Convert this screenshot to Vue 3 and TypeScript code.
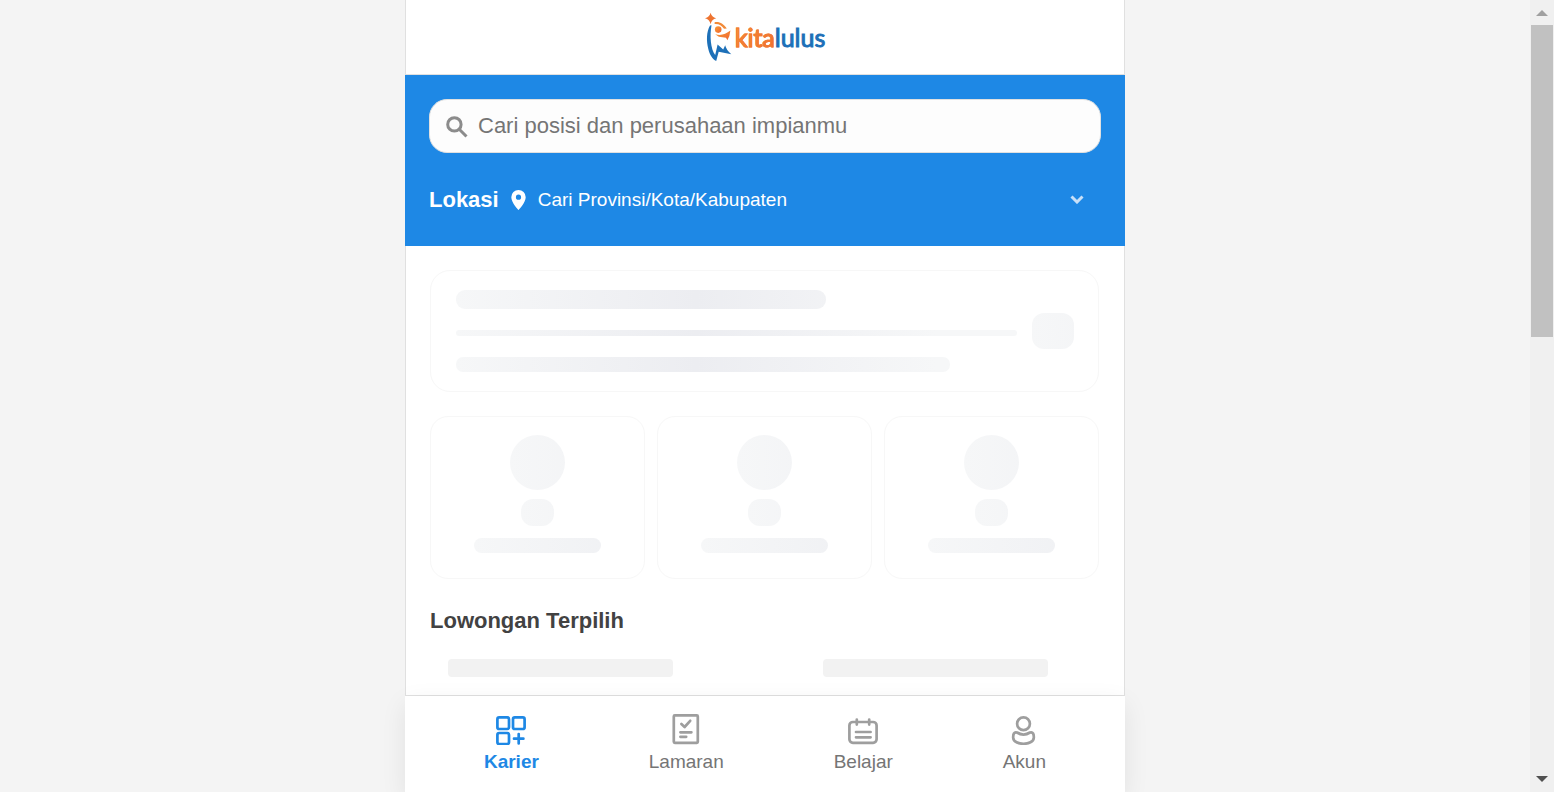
<script setup lang="ts">
import { ref } from 'vue'

type TabId = 'karier' | 'lamaran' | 'belajar' | 'akun'

interface Tab {
  id: TabId
  label: string
}

const tabs: Tab[] = [
  { id: 'karier', label: 'Karier' },
  { id: 'lamaran', label: 'Lamaran' },
  { id: 'belajar', label: 'Belajar' },
  { id: 'akun', label: 'Akun' },
]

const activeTab = ref<TabId>('karier')
const keyword = ref('')
const region = ref('')
</script>

<template>
  <div class="viewport">
    <div class="stage">
      <div class="app">
        <header class="brand">
          <a class="logo" href="#" aria-label="kitalulus">
            <svg class="logo-mark" viewBox="0 0 30 50" aria-hidden="true">
              <defs>
                <linearGradient id="flame" x1="0" y1="0" x2="1" y2="1">
                  <stop offset="0" stop-color="#fa9a35" />
                  <stop offset="1" stop-color="#ee6530" />
                </linearGradient>
              </defs>
              <path fill="#ee7430" d="M5.6 .8Q6.6 5.2 11.2 6.2Q6.6 7.2 5.6 12.2Q4.6 7.2 0 6.2Q4.6 5.2 5.6 .8Z" />
              <path fill="#f28a38" d="M9.6 10.2C15 9.4 18.5 12 21.8 16.6L19 16.8C16.5 13.5 14 11.6 9.6 12Z" />
              <circle cx="13.2" cy="17.6" r="3.3" fill="url(#flame)" />
              <path fill="url(#flame)" d="M10.2 22.2Q18 24.6 25.4 18.6Q25 24 22.4 28.2L21 25.8L13.8 24.8Z" />
              <path
                fill="#1d70b8"
                d="M5 13.6C1.4 20 1.3 29 3.3 37C4.8 43 7.5 47.2 11.2 49L13.7 39.8L26.3 42.2Q21 37.5 20.2 33.2L18.2 37.4L12.6 32.4L10.2 43C5.6 37 4.6 24 6.5 13.2Z"
              />
            </svg>
            <span class="wordmark"><span class="kita">kita</span><span class="lulus">lulus</span></span>
          </a>
        </header>

        <section class="finder">
          <label class="search">
            <svg class="search-icon" viewBox="0 0 22 22" aria-hidden="true">
              <circle cx="8.4" cy="8.4" r="6.7" />
              <path d="M13.5 13.5L20.5 20.5" />
            </svg>
            <input v-model="keyword" type="text" placeholder="Cari posisi dan perusahaan impianmu" aria-label="Cari posisi dan perusahaan" />
          </label>
          <div class="location">
            <label class="location-label" for="region">Lokasi</label>
            <svg class="pin" viewBox="0 0 15 20" aria-hidden="true">
              <path fill-rule="evenodd" d="M7.5 0A7.2 7.2 0 0 0 .3 7.2C.3 12.5 7.5 20 7.5 20S14.7 12.5 14.7 7.2A7.2 7.2 0 0 0 7.5 0ZM7.5 4.6A2.6 2.6 0 1 1 7.5 9.8A2.6 2.6 0 1 1 7.5 4.6Z" />
            </svg>
            <select id="region" v-model="region">
              <option value="">Cari Provinsi/Kota/Kabupaten</option>
            </select>
            <svg class="chevron" viewBox="0 0 14 9" aria-hidden="true">
              <path d="M1.5 1.5L7 7L12.5 1.5" />
            </svg>
          </div>
        </section>

        <main class="content">
          <div class="banner">
            <div class="banner-lines">
              <span class="bone title"></span>
              <span class="bone rule"></span>
              <span class="bone note"></span>
            </div>
            <span class="bone square"></span>
          </div>

          <div class="shortcuts">
            <div v-for="n in 3" :key="n" class="shortcut">
              <span class="bone avatar"></span>
              <span class="bone chip"></span>
              <span class="bone caption"></span>
            </div>
          </div>

          <h2>Lowongan Terpilih</h2>
          <div class="jobs">
            <div v-for="n in 2" :key="n" class="job"><span class="job-title"></span></div>
          </div>
        </main>

        <nav class="tabs">
          <button
            v-for="tab in tabs"
            :key="tab.id"
            type="button"
            :class="{ active: activeTab === tab.id }"
            @click="activeTab = tab.id"
          >
            <svg v-if="tab.id === 'karier'" viewBox="0 0 30 32" aria-hidden="true">
              <rect x="1.4" y="4.4" width="11.6" height="11.6" rx="1.8" />
              <rect x="17" y="4.4" width="11.6" height="11.6" rx="1.8" />
              <rect x="1.4" y="20" width="11.6" height="11" rx="1.8" />
              <path d="M22.7 21V30.4M18 25.7H27.4" />
            </svg>
            <svg v-else-if="tab.id === 'lamaran'" viewBox="0 0 30 32" aria-hidden="true">
              <rect x="2.8" y="2.4" width="24" height="27.4" rx="1" />
              <path d="M10.4 11L13.6 14L19.2 7.8M9.4 19.3H20.4M9.4 23.8H15.2" />
            </svg>
            <svg v-else-if="tab.id === 'belajar'" viewBox="0 0 30 32" aria-hidden="true">
              <rect x="1.4" y="9" width="27.2" height="20.8" rx="3.5" />
              <path d="M8.8 6.6V11.6M21.2 6.6V11.6M8 19H22.6M8 24.3H22.6" />
            </svg>
            <svg v-else viewBox="0 0 30 32" aria-hidden="true">
              <circle cx="14.5" cy="10.8" r="6.4" />
              <path d="M8 19.5C12 22 17 22 21 19.5C24 18.4 25 21.5 24.8 24.8C24.5 28.8 19.5 30.8 14.5 30.8S4.5 28.8 4.2 24.8C4 21.5 5 18.4 8 19.5Z" />
            </svg>
            <span>{{ tab.label }}</span>
          </button>
        </nav>
      </div>
    </div>

    <div class="scrollbar" aria-hidden="true">
      <svg class="arrow up" viewBox="0 0 12 6"><path d="M0 6L6 0L12 6Z" /></svg>
      <div class="track"><div class="thumb"></div></div>
      <svg class="arrow down" viewBox="0 0 12 6"><path d="M0 0L6 6L12 0Z" /></svg>
    </div>
  </div>
</template>

<style>
body {
  margin: 0;
  background: #f4f4f4;
}
</style>

<style scoped>
* {
  box-sizing: border-box;
}

.viewport {
  display: flex;
  height: 100vh;
  overflow: hidden;
  font-family: "Liberation Sans", Arial, sans-serif;
  color: #424242;
  background: #f4f4f4;
}

.stage {
  flex: 1;
  min-width: 0;
  display: flex;
  justify-content: center;
}

.app {
  width: 100%;
  max-width: 720px;
  display: flex;
  flex-direction: column;
  background: #fff;
}

.brand {
  flex: none;
  height: 75px;
  display: flex;
  align-items: center;
  justify-content: center;
  border: 1px solid #e0e0e0;
  border-top: 0;
}

.logo {
  display: flex;
  align-items: center;
  text-decoration: none;
}

.logo-mark {
  width: 30px;
  height: 50px;
}

.wordmark {
  font-family: Lato, "Liberation Sans", sans-serif;
  font-size: 25px;
  line-height: 32px;
  font-weight: 400;
}

.kita {
  color: transparent;
  background: linear-gradient(135deg, #fb9a35, #ec6530);
  background-clip: text;
  -webkit-text-stroke: 1px #f27a32;
}

.lulus {
  color: #1d70b8;
  -webkit-text-stroke: 1px #1d70b8;
}

.finder {
  flex: none;
  padding: 24px;
  background: #1e88e5;
}

.search {
  display: flex;
  align-items: center;
  gap: 10px;
  height: 54px;
  padding: 0 16px;
  border: 1px solid #e0e0e0;
  border-radius: 18px;
  background: #fdfdfd;
}

.search-icon {
  flex: none;
  width: 22px;
  height: 22px;
  margin-top: 2px;
  fill: none;
  stroke: #8c8c8c;
  stroke-width: 3;
}

.search input {
  flex: 1;
  min-width: 0;
  padding: 0;
  border: 0;
  outline: 0;
  background: transparent;
  font: inherit;
  font-size: 22px;
  line-height: 32px;
  color: #424242;
}

.search input::placeholder {
  color: #757575;
  opacity: 1;
}

.location {
  display: flex;
  align-items: center;
  height: 45px;
  margin-top: 24px;
  padding-right: 17px;
  color: #fff;
}

.location-label {
  font-size: 22px;
  font-weight: 700;
}

.pin {
  width: 15px;
  height: 20px;
  margin: 0 12px;
  fill: #fff;
}

.location select {
  flex: 1;
  min-width: 0;
  padding: 0;
  border: 0;
  outline: 0;
  appearance: none;
  background: transparent;
  font: inherit;
  font-size: 19px;
  color: #fff;
}

.location select option {
  color: #424242;
}

.chevron {
  width: 14px;
  height: 9px;
  fill: none;
  stroke: #c8e0f8;
  stroke-width: 3;
}

.content {
  flex: 1;
  min-height: 0;
  overflow: hidden;
  padding: 24px 25px 0 24px;
  border: 1px solid #e0e0e0;
  border-top: 0;
}

.bone {
  display: block;
  background: linear-gradient(to right, #f6f7f8 0, #ecedf1 240px, #f6f7f8 480px);
}

.banner {
  display: flex;
  align-items: center;
  gap: 15px;
  padding: 19px 24px 19px 25px;
  border: 1px solid #f7f7f7;
  border-radius: 20px;
}

.banner-lines {
  flex: 1;
  display: grid;
  gap: 21px;
}

.title {
  width: 66%;
  height: 19px;
  border-radius: 9px;
}

.rule {
  height: 6px;
  border-radius: 3px;
}

.note {
  width: 88%;
  height: 15px;
  border-radius: 7px;
}

.square {
  flex: none;
  width: 42px;
  height: 36px;
  border-radius: 12px;
}

.shortcuts {
  display: grid;
  grid-template-columns: repeat(3, 1fr);
  gap: 12px;
  margin-top: 24px;
}

.shortcut {
  display: flex;
  flex-direction: column;
  align-items: center;
  padding: 18px 0 25px;
  border: 1px solid #f7f7f7;
  border-radius: 18px;
}

.avatar {
  width: 55px;
  height: 55px;
  border-radius: 50%;
}

.chip {
  width: 33px;
  height: 27px;
  margin-top: 9px;
  border-radius: 12px;
}

.caption {
  width: 60%;
  height: 15px;
  margin-top: 12px;
  border-radius: 8px;
}

h2 {
  margin: 30px 0 26px;
  font-size: 22px;
  line-height: 24px;
  font-weight: 700;
}

.jobs {
  display: grid;
  grid-auto-flow: column;
  grid-auto-columns: 375px;
  overflow: hidden;
}

.job {
  height: 120px;
  padding-left: 18px;
}

.job-title {
  display: block;
  width: 225px;
  height: 18px;
  border-radius: 4px;
  background: #f2f2f2;
}

.tabs {
  flex: none;
  display: flex;
  justify-content: space-around;
  height: 96px;
  padding: 17px 24px 0;
  background: #fff;
  box-shadow: 0 8px 24px rgba(0, 0, 0, 0.08);
}

.tabs button {
  display: flex;
  flex-direction: column;
  align-items: center;
  gap: 4px;
  height: 64px;
  padding: 0;
  border: 0;
  background: none;
  font: inherit;
  font-size: 19px;
  line-height: 26px;
  color: #757575;
  cursor: pointer;
}

.tabs button.active {
  color: #1e88e5;
  font-weight: 700;
}

.tabs svg {
  width: 30px;
  height: 32px;
  fill: none;
  stroke: #9e9e9e;
  stroke-width: 2.7;
  stroke-linecap: round;
  stroke-linejoin: round;
}

.tabs .active svg {
  stroke: #1e88e5;
}

.scrollbar {
  flex: none;
  display: flex;
  flex-direction: column;
  align-items: center;
  width: 24px;
  padding: 10px 0;
  background: #f0f0f0;
}

.arrow {
  flex: none;
  width: 12px;
  height: 6px;
}

.up {
  fill: #a0a0a0;
}

.down {
  fill: #505050;
}

.track {
  flex: 1;
  width: 22px;
  padding: 9px 0;
}

.thumb {
  height: 42%;
  background: #c1c1c1;
}
</style>
